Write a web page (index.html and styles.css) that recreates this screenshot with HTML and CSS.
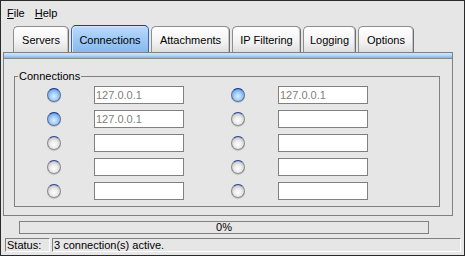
FILE: index.html
```html
<!DOCTYPE html>
<html lang="en">
<head>
  <meta charset="UTF-8" />
  <title>Server Monitor</title>
  <link rel="stylesheet" href="styles.css">
</head>
<body>

  <div class="window">
    <div class="menubar">
      <span class="menu"><u>F</u>ile</span>
      <span class="menu"><u>H</u>elp</span>
    </div>

    <div class="tabs">
      <div class="tab w-servers">Servers</div>
      <div class="tab w-conn active">Connections</div>
      <div class="tab w-attach">Attachments</div>
      <div class="tab w-ip">IP Filtering</div>
      <div class="tab w-log">Logging</div>
      <div class="tab w-opt">Options</div>
    </div>

    <div class="panel">
      <div class="group">
        <span class="group-title">Connections</span>
        <div class="conn-grid">
          <div class="slot"><span class="radio on"></span><div class="field">127.0.0.1</div></div>
          <div class="slot"><span class="radio on"></span><div class="field">127.0.0.1</div></div>
          <div class="slot"><span class="radio on"></span><div class="field">127.0.0.1</div></div>
          <div class="slot"><span class="radio"></span><div class="field"></div></div>
          <div class="slot"><span class="radio"></span><div class="field"></div></div>
          <div class="slot"><span class="radio"></span><div class="field"></div></div>
          <div class="slot"><span class="radio"></span><div class="field"></div></div>
          <div class="slot"><span class="radio"></span><div class="field"></div></div>
          <div class="slot"><span class="radio"></span><div class="field"></div></div>
          <div class="slot"><span class="radio"></span><div class="field"></div></div>
        </div>
      </div>
    </div>

    <div class="progress">0%</div>

    <div class="statusbar">
      <div class="status-label">Status:</div>
      <div class="status-text">3 connection(s) active.</div>
    </div>
  </div>

</body>
</html>
```

FILE: styles.css
```css
/* Base */
* { box-sizing: border-box; margin: 0; padding: 0; }
body {
  font-family: 'Liberation Sans', Arial, sans-serif;
  font-size: 11px;
  line-height: 13px;
  color: #000;
  background: #e6e6e6;
}

.window {
  width: 465px;
  height: 256px;
  border: 1px solid #2a2a2a;
  background: #e6e6e6;
  display: flex;
  flex-direction: column;
}

/* Menu */
.menubar {
  height: 24px;
  padding: 6px 0 0 6px;
  display: flex;
}
.menu { margin-right: 10px; }
.menu u { text-decoration: underline; }

/* Tabs */
.tabs {
  display: flex;
  align-items: flex-end;
  gap: 2px;
  padding-left: 12px;
  height: 27px;
}
.tab {
  height: 26px;
  padding-top: 7px;
  text-align: center;
  border: 1px solid #8e8e8e;
  border-bottom: none;
  border-right-color: #6e6e6e;
  border-radius: 5px 5px 0 0;
  background: linear-gradient(#ffffff, #f2f2f2 60%, #dedede);
  box-shadow: inset -1px 0 0 #c4c4c4;
}
.tab.active {
  height: 27px;
  padding-top: 8px;
  border-color: #3f66a8;
  border-top-color: #1a3b92;
  background: linear-gradient(#bcdafc, #9cc8f6 55%, #86b8f0);
  box-shadow: inset 1px 1px 0 #d6e8fd;
}
.w-servers { width: 56px; }
.w-conn { width: 78px; }
.w-attach { width: 79px; }
.w-ip { width: 69px; }
.w-log { width: 53px; }
.w-opt { width: 56px; }

/* Panel */
.panel {
  width: 450px;
  height: 164px;
  margin-left: 2px;
  border: 1px solid #808080;
}
.panel::before {
  content: "";
  display: block;
  height: 5px;
  background: linear-gradient(#d4e8fc, #b2d6fa 50%, #7fb2ea);
  border-bottom: 1px solid #8a8a8a;
}

.group {
  position: relative;
  width: 426px;
  height: 131px;
  margin: 17px 0 0 10px;
  border: 1px solid #808080;
}
.group-title {
  position: absolute;
  top: -7px;
  left: 3px;
  padding: 0 1px;
  background: #e6e6e6;
}

.conn-grid {
  display: grid;
  grid-template-columns: 137px 137px;
  column-gap: 47px;
  row-gap: 6px;
  padding: 9px 0 0 32px;
}
.slot {
  display: flex;
  align-items: center;
  gap: 33px;
}
.radio {
  width: 14px;
  height: 14px;
  border-radius: 50%;
  border: 1px solid #8a8a8a;
  border-top-color: #2b3f8c;
  background: radial-gradient(circle at 50% 62%, #ffffff, #e8e8e8 45%, #b4b4b4 85%);
  box-shadow: 0 1px 0 rgba(0, 0, 0, 0.15);
}
.radio.on {
  border-color: #5a6f96;
  border-top-color: #13308a;
  background: radial-gradient(circle at 50% 62%, #dcefff, #9ccaf8 45%, #5a94e0 85%);
}
.field {
  width: 90px;
  height: 18px;
  border: 1px solid #808080;
  background: #fff;
  color: #808080;
  padding-left: 1px;
  line-height: 16px;
}

/* Progress */
.progress {
  width: 410px;
  height: 13px;
  margin: 5px 0 0 18px;
  border: 1px solid #808080;
  text-align: center;
  line-height: 11px;
}

/* Status */
.statusbar {
  display: flex;
  gap: 2px;
  margin: 4px 0 0 4px;
  height: 14px;
}
.status-label,
.status-text {
  height: 14px;
  border: 1px solid #ffffff;
  border-top-color: #808080;
  border-left-color: #808080;
  padding-left: 1px;
  line-height: 12px;
}
.status-label { width: 45px; }
.status-text { width: 409px; }
```
